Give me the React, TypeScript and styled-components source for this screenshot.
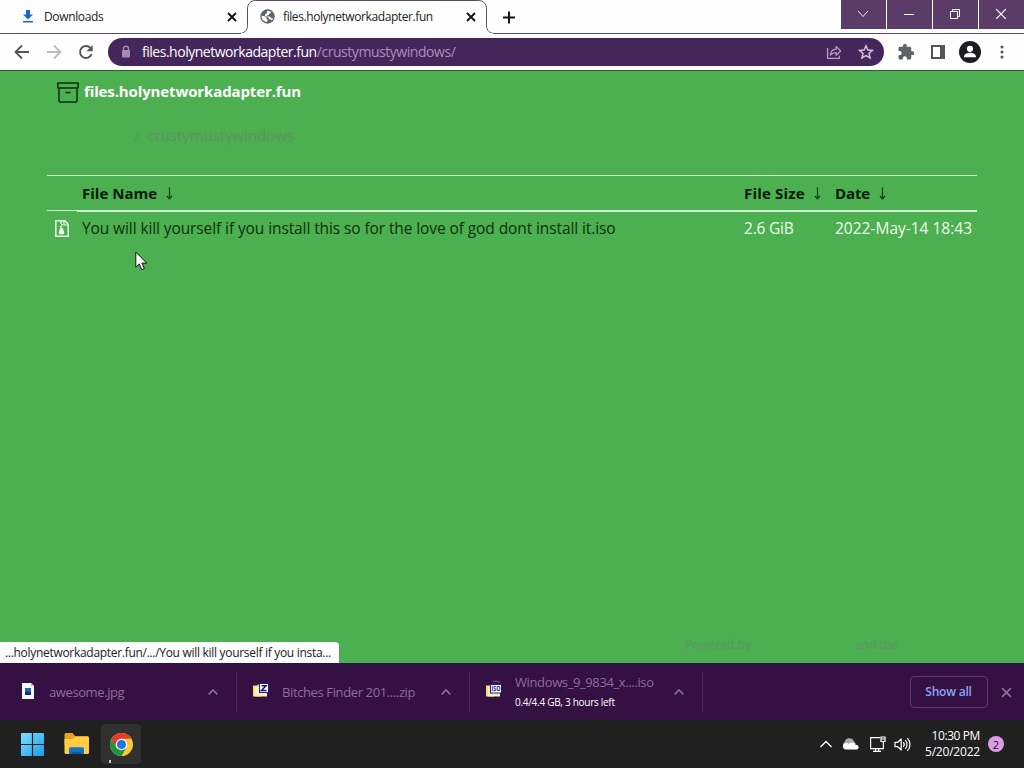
import React from 'react';
import styled, { createGlobalStyle } from 'styled-components';

const GlobalStyle = createGlobalStyle`
    * { box-sizing: border-box; }
    body {
        margin: 0;
        overflow: hidden;
        font-family: "Open Sans", "Noto Sans", sans-serif;
    }
    svg { display: block; flex: none; }
`;

const Screen = styled.div`
    position: relative;
    display: flex;
    flex-direction: column;
    width: 1024px;
    height: 768px;
    overflow: hidden;
    background: #4caf50;
`;

/* ---------- text ---------- */

interface LabelProps {
    $size?: number;
    $weight?: number;
    $color?: string;
    $spacing?: number;
}

const Label = styled.span<LabelProps>`
    white-space: pre;
    font-size: ${({ $size = 12 }) => $size}px;
    font-weight: ${({ $weight = 400 }) => $weight};
    color: ${({ $color = '#222' }) => $color};
    letter-spacing: ${({ $spacing = 0 }) => $spacing}px;
`;

/* ---------- tab strip ---------- */

const TabStrip = styled.div`
    display: flex;
    height: 34px;
    flex: none;
    background: #fefefe;
    box-shadow: inset 0 -1px #5c4a62;
`;

const Tab = styled.div<{ $width: number; $pad: number }>`
    position: relative;
    display: flex;
    align-items: center;
    width: ${({ $width }) => $width}px;
    height: 33px;
    padding-left: ${({ $pad }) => $pad}px;
    > svg:last-child {
        position: relative;
        margin-left: auto;
        margin-right: 10px;
    }
`;

const TabOutline = styled.svg`
    position: absolute;
    left: -9px;
    top: 0;
`;

const TabIcon = styled.div<{ $gap: number }>`
    position: relative;
    margin-right: ${({ $gap }) => $gap}px;
`;

const TabTitle = styled(Label)`
    position: relative;
`;

const NewTab = styled.div`
    display: flex;
    align-items: center;
    height: 33px;
    margin-left: 15px;
`;

const Caption = styled.div`
    display: flex;
    gap: 1px;
    height: 29px;
    margin-left: auto;
`;

const CaptionButton = styled.div`
    display: flex;
    align-items: center;
    justify-content: center;
    width: 45px;
    padding: 0 2px 1px 0;
    background: #5b3c68;
`;

/* ---------- toolbar ---------- */

const Toolbar = styled.div`
    display: flex;
    align-items: center;
    flex: none;
    height: 37px;
    padding: 0 20px 0 14px;
    background: #fefefe;
    border-bottom: 1px solid #32593a;
`;

const NavButtons = styled.div`
    display: flex;
    gap: 16px;
    width: 94px;
`;

const Omnibox = styled.div`
    display: flex;
    align-items: center;
    width: 776px;
    height: 28px;
    padding: 0 10px 0 12px;
    border-radius: 14px;
    background: #45265a;
`;

const Url = styled.div`
    display: flex;
    margin-left: 10px;
    padding-bottom: 1px;
`;

const OmniActions = styled.div`
    display: flex;
    gap: 16px;
    margin-left: auto;
`;

const ToolbarActions = styled.div`
    flex: 1;
    display: flex;
    align-items: center;
    gap: 16px;
    margin-left: 13px;
    > :nth-child(3) { margin-left: -2px; }
    > :last-child { margin-left: 3px; }
`;

/* ---------- page ---------- */

const Page = styled.main`
    flex: 1;
    display: flex;
    flex-direction: column;
    padding: 9px 47px 0;
    background: #4caf50;
`;

const SiteHeader = styled.header`
    display: flex;
    align-items: center;
    height: 24px;
    padding-left: 10px;
    gap: 5px;
    ${Label} { padding-bottom: 2px; }
`;

const Breadcrumb = styled.nav`
    display: flex;
    gap: 8px;
    height: 24px;
    align-items: center;
    margin: 19px 0 28px;
    padding-left: 87px;
`;

const FileTable = styled.table`
    width: 930px;
    border-collapse: separate;
    border-spacing: 0;
    table-layout: fixed;
    border-top: 1px solid #c9eccb;
`;

const HeadCell = styled.th<{ $thin?: boolean }>`
    height: 36px;
    padding: 0 0 0 5px;
    text-align: left;
    vertical-align: top;
    background: linear-gradient(#d3f2d5, #d3f2d5) no-repeat;
    background-size: 100% ${({ $thin }) => ($thin ? 1 : 2)}px;
    background-position: 0 34px;
`;

const HeadContent = styled.div`
    display: flex;
    align-items: center;
    gap: 8px;
    height: 35px;
    ${Label} { padding-bottom: 2px; }
`;

const Cell = styled.td<{ $icon?: boolean }>`
    height: 32px;
    padding: 0 0 0 ${({ $icon }) => ($icon ? 8 : 5)}px;
    line-height: 32px;
`;

const PoweredBy = styled.footer`
    display: flex;
    align-items: center;
    gap: 104px;
    height: 20px;
    margin-top: auto;
    margin-bottom: 9px;
    padding-left: 638px;
`;

const StatusBubble = styled.div`
    position: absolute;
    left: 0;
    top: 642px;
    width: 339px;
    height: 21px;
    padding-left: 5px;
    line-height: 19px;
    background: #fdfdfd;
    border-top-right-radius: 4px;
`;

const Pointer = styled.svg`
    position: absolute;
    left: 135px;
    top: 251px;
`;

/* ---------- download shelf ---------- */

const Shelf = styled.div`
    display: flex;
    align-items: center;
    flex: none;
    height: 57px;
    padding-right: 12px;
    background: #341043;
    border-top: 1px solid #30104a;
`;

const Download = styled.div<{ $width: number; $pad: number }>`
    display: flex;
    align-items: center;
    width: ${({ $width }) => $width}px;
    height: 40px;
    padding: 0 18px 0 ${({ $pad }) => $pad}px;
    border-right: 1px solid #4b2a5a;
    > svg:last-child { margin-left: auto; }
`;

const DownloadText = styled.div<{ $gap: number }>`
    display: flex;
    flex-direction: column;
    gap: 4px;
    margin-left: ${({ $gap }) => $gap}px;
    line-height: 16px;
`;

const ShowAll = styled.button`
    display: flex;
    align-items: center;
    justify-content: center;
    width: 78px;
    height: 32px;
    margin-left: auto;
    margin-right: 13px;
    padding: 0 1px 2px 0;
    font-family: inherit;
    background: transparent;
    border: 1px solid #5d3d70;
    border-radius: 4px;
`;

/* ---------- taskbar ---------- */

const Taskbar = styled.div`
    display: flex;
    align-items: center;
    flex: none;
    height: 48px;
    padding: 0 20px 0 20px;
    background: #202020;
`;

const TaskApps = styled.div`
    display: flex;
    align-items: center;
    gap: 20px;
`;

const ActiveApp = styled.div`
    position: relative;
    display: flex;
    align-items: center;
    justify-content: center;
    width: 40px;
    height: 40px;
    margin-left: -8px;
    border-radius: 4px;
    background: #303030;
    &::after {
        content: '';
        position: absolute;
        left: 8px;
        bottom: 1px;
        width: 2px;
        height: 3px;
        background: #ccc;
    }
`;

const Tray = styled.div`
    display: flex;
    align-items: center;
    margin-left: auto;
`;

const TrayIcons = styled.div`
    display: flex;
    align-items: center;
    gap: 10px;
    > svg:last-child { margin-left: -2px; }
`;

const Clock = styled.div`
    display: flex;
    flex-direction: column;
    align-items: flex-end;
    width: 69px;
    margin-right: 8px;
    line-height: 16px;
`;

const Badge = styled.div`
    display: flex;
    align-items: center;
    justify-content: center;
    width: 16px;
    height: 16px;
    border-radius: 50%;
    background: #df9ce6;
`;

/* ---------- icons ---------- */

const Cross = ({ size = 10, color = '#111', width = 1.8 }) => (
    <svg width={size} height={size} viewBox="0 0 10 10" stroke={color} strokeWidth={width}>
        <path d="M1 1l8 8M9 1L1 9" />
    </svg>
);

const Chevron = ({ color = '#8b6d98' }) => (
    <svg width="10" height="8" viewBox="0 0 10 8" fill="none" stroke={color} strokeWidth="1.7">
        <path d="M.7 6.3L5 2l4.3 4.3" />
    </svg>
);

const DownloadGlyph = () => (
    <svg width="10" height="13" viewBox="0 0 10 13" fill="#1967d2">
        <path d="M3 0h4v4.5h3L5 9.5 0 4.5h3zM0 11h10v1.6H0z" />
    </svg>
);

const Globe = () => (
    <svg width="15" height="15" viewBox="0 0 15 15">
        <circle cx="7.5" cy="7.5" r="7.2" fill="#5f6368" />
        <path d="M1.6 6.8l3.4.4 1.4 1.3-.2 1.2 1.3.6-.4 2.8C3.6 12.7 1.4 10 1.6 6.8z" fill="#fff" />
        <path d="M7.2 1.9l2.3.2 1.5.9c0 1-.7 1.7-1.7 1.7l-.5 1.3-1.6.2.1 1.4 3.1.1 1.4 1.7 1.5-.3c-.3 1-.8 1.8-1.5 2.4l-.9-1.1-1.6-.2-1.7-2.1L5.3 7 4.8 5.3l1.9-.9z" fill="#fff" />
    </svg>
);

const Arrow = ({ flip = false, color = '#55565a' }) => (
    <svg width="16" height="16" viewBox="0 0 16 16" fill="none" stroke={color} strokeWidth="1.8">
        <path d={flip ? 'M1 8h13M8 1.5L14.5 8 8 14.5' : 'M15 8H2M8 1.5L1.5 8 8 14.5'} />
    </svg>
);

const Reload = () => (
    <svg width="16" height="16" viewBox="0 0 16 16">
        <path d="M13.6 10.2A6 6 0 1 1 12.3 3.8L14 5.5" fill="none" stroke="#55565a" strokeWidth="1.9" />
        <path d="M14.7 1v6.2H8.5z" fill="#55565a" />
    </svg>
);

const Lock = () => (
    <svg width="12" height="14" viewBox="0 0 12 14">
        <path d="M3.5 6V3.8a2.5 2.5 0 0 1 5 0V6" fill="none" stroke="#a58ab3" strokeWidth="1.4" />
        <rect x="2" y="5" width="8" height="7.5" rx="1" fill="#a58ab3" />
    </svg>
);

const Share = () => (
    <svg width="16" height="16" viewBox="0 0 16 16" fill="none" stroke="#b89ac4" strokeWidth="1.3">
        <path d="M1.6 4v10.3h11.8v-2.6" />
        <path d="M4.4 11.1c.2-3.6 2.2-5.8 5.8-6V2.4L14.7 7l-4.5 4.2V8.6c-2.4 0-4.3.7-5.8 2.5z" strokeLinejoin="round" />
    </svg>
);

const Star = () => (
    <svg width="16" height="16" viewBox="0 0 16 16" fill="none" stroke="#d3bfdc" strokeWidth="1.5">
        <path d="M8 1.8l1.9 4.2 4.6.4-3.5 3 1.1 4.6L8 11.6 3.9 14 5 9.4l-3.5-3 4.6-.4z" />
    </svg>
);

const Puzzle = () => (
    <svg width="18" height="18" viewBox="0 0 24 24" fill="#5f6368">
        <path d="M20.5 11H19V7c0-1.1-.9-2-2-2h-4V3.5a2.5 2.5 0 0 0-5 0V5H4c-1.1 0-2 .9-2 2v3.8h1.5a2.7 2.7 0 0 1 0 5.4H2V20c0 1.1.9 2 2 2h3.8v-1.5a2.7 2.7 0 0 1 5.4 0V22H17c1.1 0 2-.9 2-2v-4h1.5a2.5 2.5 0 0 0 0-5z" />
    </svg>
);

const SidePanel = () => (
    <svg width="14" height="14" viewBox="0 0 14 14">
        <path d="M0 0h14v14H0z" fill="#55565a" />
        <path d="M2 2h7v10H2z" fill="#fefefe" />
    </svg>
);

const Avatar = () => (
    <svg width="22" height="22" viewBox="0 0 22 22">
        <circle cx="11" cy="11" r="11" fill="#1c1c20" />
        <circle cx="11" cy="7.8" r="3.1" fill="#fff" />
        <path d="M5 15.7c0-2.6 3.5-4 6-4s6 1.4 6 4v.6H5z" fill="#fff" />
    </svg>
);

const Dots = () => (
    <svg width="4" height="14" viewBox="0 0 4 14" fill="#55565a">
        <circle cx="2" cy="2" r="1.5" />
        <circle cx="2" cy="7" r="1.5" />
        <circle cx="2" cy="12" r="1.5" />
    </svg>
);

const Archive = () => (
    <svg width="22" height="21" viewBox="0 0 22 21" fill="none" stroke="#0d300f" strokeWidth="1.5">
        <rect x=".8" y="1" width="20.4" height="5" rx=".6" />
        <path d="M2 6v12.5c0 .9.5 1.5 1.4 1.5h15.2c.9 0 1.4-.6 1.4-1.5V6M8.500 10.500h5" />
    </svg>
);

const ZipFile = () => (
    <svg width="14" height="17" viewBox="0 0 14 17">
        <path d="M.8.8h9l3.400 3.400v12H.8z" fill="#4caf50" stroke="#e6f8e6" strokeWidth="1.5" />
        <path d="M9 1v4h4" fill="none" stroke="#e6f8e6" strokeWidth="1.2" />
        <path d="M5 1.5h2v2H5zM6 4h2v1.500H6zM5 6h2v1.500H5zM5.200 8h2.600l1.400 4.300c.3 1.400-.9 2.200-2.700 2.200s-3-.8-2.700-2.200z" fill="#e6f8e6" />
    </svg>
);

const SortArrow = () => (
    <svg width="9" height="13" viewBox="0 0 9 13" fill="none" stroke="#0b3d0d" strokeWidth="1.2">
        <path d="M4.500.500v11M2 9l2.500 2.800L7 9" />
    </svg>
);

const ImageFile = () => (
    <svg width="24" height="24" viewBox="0 0 24 24">
        <path d="M6 3h9l3 3v13H6z" fill="#f7f7fa" />
        <path d="M15 3v3h3z" fill="#b7b9c4" />
        <rect x="9" y="8" width="6" height="7" fill="#2766b0" />
        <path d="M9 15v-2l2-2 2 1.500 2-1V15z" fill="#14305f" />
    </svg>
);

// the folder icon carries the archive type on a small white tag
const ArchiveFile = ({ tag, progress = false }: { tag: string; progress?: boolean }) => (
    <svg width="24" height="24" viewBox="0 0 24 24">
        {progress && <path d="M8 1.500a11 11 0 0 1 7 .8" fill="none" stroke="#5a4a78" strokeWidth="1.500" />}
        <path d="M1 5.500h4l1-1h3V16.500H1z" fill="#f3df7f" />
        <path d="M3 7h12v9.500H3z" fill="#fdf0b0" />
        {tag === 'Z' ? (
            <>
                <rect x="7.500" y="3.500" width="9" height="9" fill="#fff" stroke="#1b1b8e" />
                <path d="M9.500 5.700h4.500l-4.500 4.700h5" fill="none" stroke="#14148a" strokeWidth="1.500" />
            </>
        ) : (
            <>
                <rect x="5.500" y="4.500" width="11" height="8.500" fill="#fff" stroke="#1b1b8e" />
                <text x="11" y="11.400" textAnchor="middle" textLength="9" lengthAdjust="spacingAndGlyphs" fontSize="7.500" fontWeight="700" fill="#14148a">{tag}</text>
            </>
        )}
    </svg>
);

const WindowsLogo = () => (
    <svg width="24" height="24" viewBox="0 0 24 24">
        <defs>
            <linearGradient id="win" x1="0" y1="0" x2="1" y2="1">
                <stop offset="0" stopColor="#84dcff" />
                <stop offset="1" stopColor="#169ee8" />
            </linearGradient>
        </defs>
        <path d="M2.500 1h9.400v10.900H1V2.500C1 1.500 1.500 1 2.500 1zM13.100 1H22.500c1 0 1.500.5 1.500 1.500v9.400H13.100zM1 13.100h10.900V24H2.500C1.500 24 1 23.500 1 22.500zM13.100 13.100H24v9.400c0 1-.5 1.500-1.500 1.500h-9.400z" fill="url(#win)" />
    </svg>
);

const Folder = () => (
    <svg width="25" height="22" viewBox="0 0 25 22">
        <path d="M.500 1.500C.5.700 1.200 0 2 0h6.500L11 3h12.500c.8 0 1.500.7 1.500 1.500V12H.5z" fill="#e5a51c" />
        <path d="M.5 6h8L11 4h12.500c1 0 1.500.5 1.500 1.500v14c0 .9-.6 1.500-1.500 1.500H2C1.100 21 .5 20.400.5 19.500z" fill="#fdcd45" />
        <path d="M5 21v-5c0-1 .7-1.700 1.700-1.700h11.600c1 0 1.700.7 1.700 1.700v5z" fill="#1673c2" />
        <path d="M8 21v-2h9v2z" fill="#0d579f" />
    </svg>
);

const ChromeLogo = () => (
    <svg width="23" height="23" viewBox="0 0 24 24">
        <circle cx="12" cy="12" r="12" fill="#fcc934" />
        <path d="M12 6h10.400A12 12 0 0 0 1.600 6l5.200 9z" fill="#e33b2e" />
        <path d="M1.600 6A12 12 0 0 0 12 24l5.200-9L12 12l-5.200 3z" fill="#229342" />
        <circle cx="12" cy="12" r="6" fill="#fff" />
        <circle cx="12" cy="12" r="4.700" fill="#2672e5" />
    </svg>
);

const Cloud = () => (
    <svg width="17" height="12" viewBox="0 0 17 12">
        <path d="M3 9.500A3 3 0 0 1 2.600 4 5 5 0 0 1 12 3.200L14 6z" fill="#aaa" />
        <path d="M3.800 11.500a3.200 3.200 0 0 1-.4-6.300c1.600-.3 2.700.3 3.400.8 2-2.200 5.800-1.800 6.700.8 1.900-.2 3.100 1 3.100 2.400 0 1.400-1 2.300-2.400 2.300z" fill="#fff" />
    </svg>
);

const Network = () => (
    <svg width="17" height="17" viewBox="0 0 17 17" fill="none" stroke="#fff" strokeWidth="1.2">
        <path d="M11 1.600H1.600v11h12.800V8M4 15.400h8M6.500 12.600v2.800M9.700 12.600v2.800" />
        <path d="M12 1h4v4.500h-4zM12 3h4M14.400 5.500V8" />
    </svg>
);

const Volume = () => (
    <svg width="17" height="15" viewBox="0 0 17 15" fill="none" stroke="#fff" strokeWidth="1.2">
        <path d="M1 5.300h2.800L7.200 2v11L3.800 9.700H1z" strokeLinejoin="round" />
        <path d="M9.300 5.200a3.500 3.500 0 0 1 0 4.600M11.300 3.200a6.200 6.200 0 0 1 0 8.600M13.400 1.200a9 9 0 0 1 0 12.600" />
    </svg>
);

/* ---------- app ---------- */

const columns = [
    { name: 'File Name', spacing: 0.03 },
    { name: 'File Size', spacing: 0.18 },
    { name: 'Date', spacing: -0.1 },
];

export default function App() {
    return (
        <Screen>
            <GlobalStyle />
            <TabStrip>
                <Tab $width={247} $pad={23}>
                    <TabIcon $gap={11}><DownloadGlyph /></TabIcon>
                    <TabTitle $size={12} $spacing={-0.35}>Downloads</TabTitle>
                    <Cross />
                </Tab>
                <Tab $width={239} $pad={13}>
                    <TabOutline width="258" height="34" viewBox="0 0 258 34">
                        <path d="M0 33.500h1c5 0 8.500-3 8.500-8V9c0-5 3-8.500 8-8.500h223c5 0 8 3.500 8 8.500v16.500c0 5 3.500 8 8.500 8h1V34H0z" fill="#fefefe" stroke="#5c4a62" />
                        <path d="M3 33h252v2H3z" fill="#fefefe" />
                    </TabOutline>
                    <TabIcon $gap={8}><Globe /></TabIcon>
                    <TabTitle $size={12} $spacing={-0.41}>files.holynetworkadapter.fun</TabTitle>
                    <Cross />
                </Tab>
                <NewTab>
                    <svg width="14" height="14" viewBox="0 0 14 14" stroke="#111" strokeWidth="2"><path d="M8 1.500v12M2 7.500h12" /></svg>
                </NewTab>
                <Caption>
                    <CaptionButton>
                        <svg width="12" height="8" viewBox="0 0 12 8" fill="none" stroke="#eee6f0"><path d="M1 1l5 5.500L11 1" /></svg>
                    </CaptionButton>
                    <CaptionButton>
                        <svg width="10" height="10" viewBox="0 0 10 10" stroke="#fff"><path d="M0 5.500h10" /></svg>
                    </CaptionButton>
                    <CaptionButton>
                        <svg width="10" height="10" viewBox="0 0 10 10" fill="none" stroke="#fff"><path d="M.5 2.500h7v7h-7zM2.500 2.500v-2h7v7h-2" /></svg>
                    </CaptionButton>
                    <CaptionButton><Cross size={12} color="#fff" width={1} /></CaptionButton>
                </Caption>
            </TabStrip>

            <Toolbar>
                <NavButtons>
                    <Arrow />
                    <Arrow flip color="#bdbdbf" />
                    <Reload />
                </NavButtons>
                <Omnibox>
                    <Lock />
                    <Url>
                        <Label $size={14} $color="#fff" $spacing={-0.48}>files.holynetworkadapter.fun</Label>
                        <Label $size={14} $color="#ab8fba" $spacing={-0.45}>/crustymustywindows/</Label>
                    </Url>
                    <OmniActions>
                        <Share />
                        <Star />
                    </OmniActions>
                </Omnibox>
                <ToolbarActions>
                    <Puzzle />
                    <SidePanel />
                    <Avatar />
                    <Dots />
                </ToolbarActions>
            </Toolbar>

            <Page>
                <SiteHeader>
                    <Archive />
                    <Label $size={15} $weight={700} $color="#fff" $spacing={-0.12}>files.holynetworkadapter.fun</Label>
                </SiteHeader>
                <Breadcrumb>
                    <Label $size={15} $color="#61926a">/</Label>
                    <Label $size={15} $color="#61926a" $spacing={-0.05}>crustymustywindows</Label>
                </Breadcrumb>
                <FileTable>
                    <colgroup>
                        <col width="30" />
                        <col width="662" />
                        <col width="91" />
                        <col width="147" />
                    </colgroup>
                    <thead>
                        <tr>
                            <HeadCell $thin />
                            {columns.map(({ name, spacing }) => (
                                <HeadCell key={name}>
                                    <HeadContent>
                                        <Label $size={15} $weight={700} $color="#051a06" $spacing={spacing}>{name}</Label>
                                        <SortArrow />
                                    </HeadContent>
                                </HeadCell>
                            ))}
                        </tr>
                    </thead>
                    <tbody>
                        <tr>
                            <Cell $icon><ZipFile /></Cell>
                            <Cell><Label $size={15.5} $color="#0a330c" $spacing={-0.1}>You will kill yourself if you install this so for the love of god dont install it.iso</Label></Cell>
                            <Cell><Label $size={15.5} $color="#eefbee" $spacing={-0.2}>2.6 GiB</Label></Cell>
                            <Cell><Label $size={15.5} $color="#eefbee">2022-May-14 18:43</Label></Cell>
                        </tr>
                    </tbody>
                </FileTable>
                <PoweredBy>
                    <Label $size={12} $color="#61926a">Powered by</Label>
                    <Label $size={12} $color="#61926a">and the</Label>
                </PoweredBy>
            </Page>

            <Shelf>
                <Download $width={237} $pad={16}>
                    <ImageFile />
                    <DownloadText $gap={9}>
                        <Label $size={13} $color="#8c6e99" $spacing={-0.4}>awesome.jpg</Label>
                    </DownloadText>
                    <Chevron />
                </Download>
                <Download $width={233} $pad={15}>
                    <ArchiveFile tag="Z" />
                    <DownloadText $gap={6}>
                        <Label $size={13} $color="#8c6e99" $spacing={-0.38}>Bitches Finder 201....zip</Label>
                    </DownloadText>
                    <Chevron />
                </Download>
                <Download $width={233} $pad={15}>
                    <ArchiveFile tag="ISO" progress />
                    <DownloadText $gap={6}>
                        <Label $size={13} $color="#8c6e99" $spacing={-0.38}>Windows_9_9834_x....iso</Label>
                        <Label $size={10} $color="#fff" $spacing={-0.28}>0.4/4.4 GB, 3 hours left</Label>
                    </DownloadText>
                    <Chevron />
                </Download>
                <ShowAll>
                    <Label $size={12} $weight={600} $color="#8ca5f2" $spacing={-0.2}>Show all</Label>
                </ShowAll>
                <Cross size={11} color="#8b7494" width={1.5} />
            </Shelf>

            <Taskbar>
                <TaskApps>
                    <WindowsLogo />
                    <Folder />
                    <ActiveApp><ChromeLogo /></ActiveApp>
                </TaskApps>
                <Tray>
                    <TrayIcons>
                        <svg width="12" height="8" viewBox="0 0 12 8" fill="none" stroke="#fff" strokeWidth="1.3"><path d="M.5 7L6 1.500 11.500 7" /></svg>
                        <Cloud />
                        <Network />
                        <Volume />
                    </TrayIcons>
                    <Clock>
                        <Label $size={12} $color="#fff" $spacing={-0.4}>10:30 PM</Label>
                        <Label $size={12} $color="#fff" $spacing={-0.2}>5/20/2022</Label>
                    </Clock>
                    <Badge><Label $size={11} $color="#201020">2</Label></Badge>
                </Tray>
            </Taskbar>

            <StatusBubble>
                <Label $size={12} $color="#222" $spacing={-0.3}>...holynetworkadapter.fun/.../You will kill yourself if you insta...</Label>
            </StatusBubble>
            <Pointer width="13" height="20" viewBox="0 0 13 20">
                <path d="M.8 1v15.300l3.500-3.300 2.400 5.700 2.600-1.100-2.400-5.500h4.800z" fill="#fff" stroke="#111" />
            </Pointer>
        </Screen>
    );
}
